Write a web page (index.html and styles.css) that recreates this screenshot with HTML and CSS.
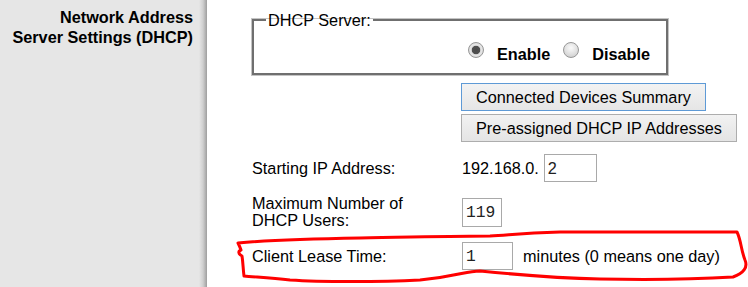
FILE: index.html
```
<!DOCTYPE html>
<html lang="en">
<head>
  <meta charset="UTF-8" />
  <title>Network Address Server Settings (DHCP)</title>
  <link rel="stylesheet" href="styles.css">
</head>
<body>

  <div class="page">
    <aside class="side">
      <h2 class="side-title">Network Address<br>Server Settings (DHCP)</h2>
    </aside>

    <main class="main">
      <fieldset class="dhcp-box">
        <legend>DHCP Server:</legend>
        <div class="radio-row">
          <label class="radio"><span class="radio-dot is-on"></span> Enable</label>
          <label class="radio"><span class="radio-dot"></span> Disable</label>
        </div>
      </fieldset>

      <div class="actions">
        <button class="btn btn-focus">Connected Devices Summary</button>
        <button class="btn">Pre-assigned DHCP IP Addresses</button>
      </div>

      <div class="form">
        <div class="form-row">
          <span class="form-label">Starting IP Address:</span>
          <span class="form-value">192.168.0.<input type="text" class="field field-ip" value="2"></span>
        </div>
        <div class="form-row">
          <span class="form-label">Maximum Number of<br>DHCP Users:</span>
          <span class="form-value"><input type="text" class="field field-mono field-users" value="119"></span>
        </div>
        <div class="form-row">
          <span class="form-label">Client Lease Time:</span>
          <span class="form-value"><input type="text" class="field field-mono field-lease" value="1"><span class="unit">minutes (0 means one day)</span></span>
        </div>
      </div>
    </main>

    <!-- red pen mark around the lease row -->
    <svg class="markup" width="748" height="287" viewBox="0 0 748 287">
      <path d="M238 243 C 260 241, 300 239, 360 238 S 460 236, 490 236 C 510 235, 520 233, 560 232 L 737 232 C 741 240, 741 250, 745 260 C 748 267, 744 273, 733 277 C 700 279, 650 280, 600 279 C 550 278, 510 274, 480 271 C 465 271, 460 276, 420 280 C 380 282, 320 282, 290 280 C 270 278, 255 277, 244 276 C 243 268, 243 262, 242 256 C 238 254, 238 251, 241 250 C 240 247, 239 245, 238 243 Z"
            fill="none" stroke="#ff0000" stroke-width="3" stroke-linejoin="round"/>
    </svg>
  </div>

</body>
</html>
```

FILE: styles.css
```
body {
  margin: 0;
  background: #fff;
  font-family: "Liberation Sans", Arial, sans-serif;
  font-size: 16.25px;
  color: #000;
}

.page {
  display: flex;
  position: relative;
  min-height: 287px;
}

.side {
  width: 207px;
  flex: none;
  background: linear-gradient(to right, #e6e6e6 0, #e6e6e6 199px, #cfcfcf 203px, #9e9e9e 207px);
}

.side-title {
  margin: 0;
  padding: 7px 14px 0 0;
  text-align: right;
  font-size: 16.25px;
  line-height: 20px;
  font-weight: bold;
}

.main {
  flex: 1;
  padding: 11px 0 0 45px;
}

.dhcp-box {
  box-sizing: border-box;
  width: 416px;
  margin: 0;
  padding: 15px 16px 9px 12px;
  border: 2px solid #6f6f6f;
  box-shadow: 0 0 0 1px #c4c4c4;
}

.dhcp-box legend {
  padding: 0 2px;
  line-height: 18px;
}

.radio-row {
  display: flex;
  justify-content: flex-end;
  gap: 13px;
  line-height: 20px;
  font-weight: bold;
}

.radio {
  display: flex;
  align-items: flex-start;
  gap: 13px;
}

.radio-dot {
  box-sizing: border-box;
  width: 16px;
  height: 16px;
  margin-top: -2px;
  border: 1px solid #979797;
  border-radius: 50%;
  background: radial-gradient(circle at 50% 35%, #fafafa 0, #e2e2e2 50%, #c6c6c6 100%);
}

.radio-dot.is-on {
  background: radial-gradient(circle, #4a4a4a 0, #505050 3.8px, #d8d8d8 4.6px, #e6e6e6 5.6px, #c6c6c6 100%);
}

.actions {
  display: flex;
  flex-direction: column;
  align-items: flex-start;
  gap: 3px;
  margin: 8px 0 0 209px;
}

.btn {
  height: 28px;
  padding: 0 14px;
  border: 1px solid #adadad;
  background: linear-gradient(#f2f2f2, #e4e4e4);
  font-family: inherit;
  font-size: 16.25px;
  color: #000;
}

.btn-focus {
  border-color: #5e9ad6;
  background: linear-gradient(#f3f3f3, #e6e6e6);
}

.form {
  display: flex;
  flex-direction: column;
  gap: 13px;
  margin-top: 12px;
}

.form-row {
  display: flex;
  align-items: center;
}

.form-label {
  width: 210px;
  flex: none;
  line-height: 17px;
}

.form-value {
  display: flex;
  align-items: center;
}

.field {
  box-sizing: border-box;
  height: 28px;
  margin: 0;
  padding: 0 3px;
  border: 1px solid #a9a9a9;
  font-family: inherit;
  font-size: 16.25px;
  color: #222;
}

.field-ip {
  width: 53px;
  margin-left: 5px;
}

.field-mono {
  font-family: "Liberation Mono", "Courier New", monospace;
}

.field-users {
  width: 40px;
  height: 29px;
}

.field-lease {
  width: 51px;
}

.unit {
  margin-left: 10px;
}

.markup {
  position: absolute;
  top: 0;
  left: 0;
  pointer-events: none;
}
```
